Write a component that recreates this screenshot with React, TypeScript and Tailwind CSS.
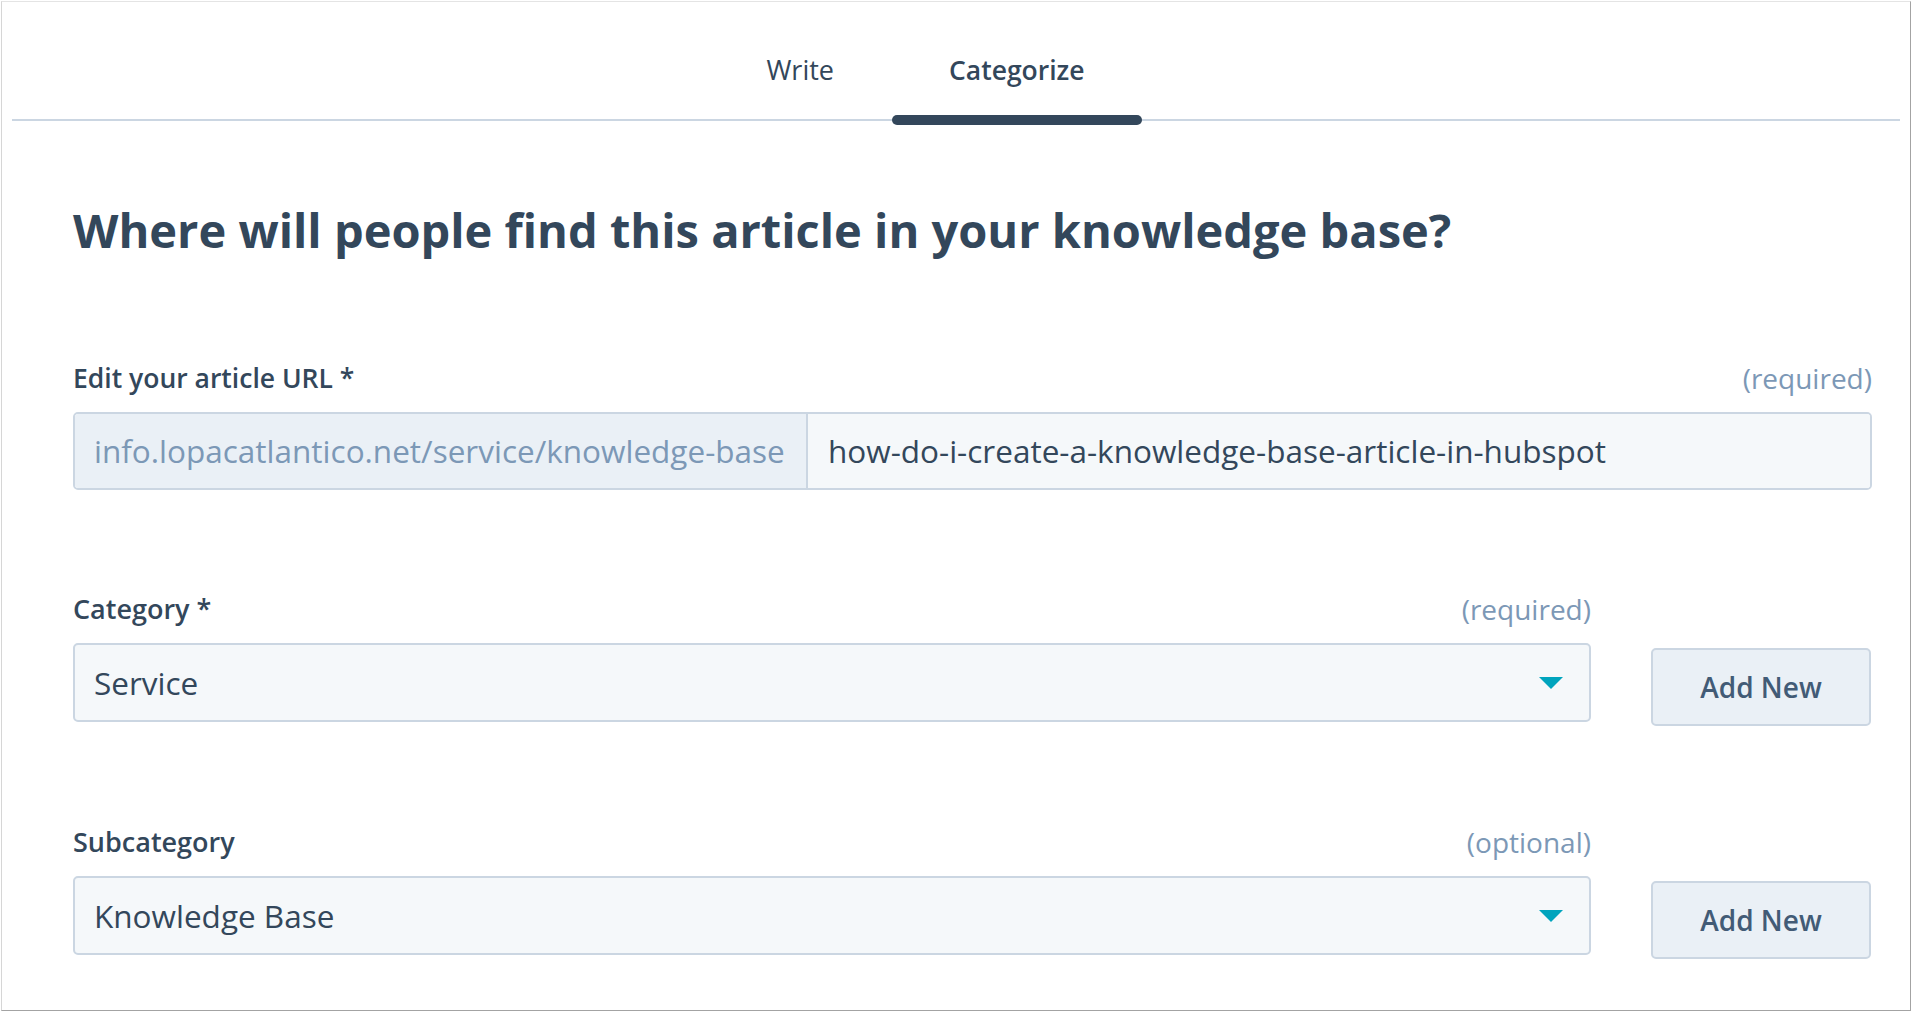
import React from "react";

const font = { fontFamily: "'Open Sans', 'Noto Sans', sans-serif" };

function Caret() {
  return (
    <svg width="24" height="12" viewBox="0 0 24 12" className="shrink-0">
      <path d="M0 0 L24 0 L12 12 Z" fill="#00a4bd" />
    </svg>
  );
}

function SelectField({
  label,
  hint,
  value,
}: {
  label: string;
  hint: string;
  value: string;
}) {
  return (
    <div className="flex items-start gap-[60px] h-[129px]">
      <div className="w-[1518px]">
        <div className="flex items-center justify-between h-[32px] mb-[18px]">
          <span className="text-[27px] leading-[32px] font-semibold text-[#33475b]">{label}</span>
          <span className="text-[28px] leading-[32px] text-[#7c98b6]">{hint}</span>
        </div>
        <div className="h-[79px] flex items-center justify-between px-[19px] pr-[26px] bg-[#f5f8fa] border-2 border-[#cbd6e2] rounded-[5px]">
          <span className="text-[31.5px] text-[#33475b]">{value}</span>
          <Caret />
        </div>
      </div>
      <button className="mt-[55px] w-[220px] h-[78px] shrink-0 flex items-center justify-center bg-[#eaf0f6] border-2 border-[#cbd6e2] rounded-[5px] text-[28px] font-semibold text-[#425b76]">
        Add New
      </button>
    </div>
  );
}

export default function App() {
  return (
    <div className="w-[1912px] h-[1012px] bg-white" style={font}>
      <div className="ml-px mt-px w-[1910px] h-[1010px] border border-t-[#e4e4e4] border-l-[#d6d6d6] border-r-[#a3a3a3] border-b-[#a3a3a3] bg-white overflow-hidden">
        {/* Tabs */}
        <div className="mx-[10px] border-b-2 border-[#cbd6e2] flex justify-center pr-[62px] pt-[48px]">
          <div className="flex">
            <div className="px-[58px] pb-[29px] text-[27px] leading-[40px] text-[#33475b]">Write</div>
            <div className="relative px-[57px] pb-[29px] text-[26.5px] leading-[40px] font-semibold text-[#33475b]">
              Categorize
              <div className="absolute left-0 right-0 -bottom-[6px] h-[10px] rounded-[5px] bg-[#33475b]" />
            </div>
          </div>
        </div>

        <div className="pl-[71px] pr-[38px]">
          <h1 className="mt-[79px] text-[47px] leading-[60px] font-bold text-[#33475b]">
            Where will people find this article in your knowledge base?
          </h1>

          {/* URL */}
          <div className="mt-[102px]">
            <div className="flex items-center justify-between h-[32px] mb-[18px]">
              <span className="text-[26.5px] leading-[32px] font-semibold text-[#33475b]">Edit your article URL *</span>
              <span className="text-[28px] leading-[32px] text-[#7c98b6]">(required)</span>
            </div>
            <div className="h-[78px] flex border-2 border-[#cbd6e2] rounded-[5px] overflow-hidden">
              <div className="w-[733px] shrink-0 flex items-center px-[19px] bg-[#eaf0f6] border-r-2 border-[#cbd6e2] text-[31.5px] text-[#7c98b6] whitespace-nowrap">
                info.lopacatlantico.net/service/knowledge-base
              </div>
              <div className="flex-1 flex items-center px-[20px] bg-[#f5f8fa] text-[31.5px] text-[#33475b] whitespace-nowrap">
                how-do-i-create-a-knowledge-base-article-in-hubspot
              </div>
            </div>
          </div>

          <div className="mt-[103px]">
            <SelectField label="Category *" hint="(required)" value="Service" />
          </div>
          <div className="mt-[104px]">
            <SelectField label="Subcategory" hint="(optional)" value="Knowledge Base" />
          </div>
        </div>
      </div>
    </div>
  );
}
